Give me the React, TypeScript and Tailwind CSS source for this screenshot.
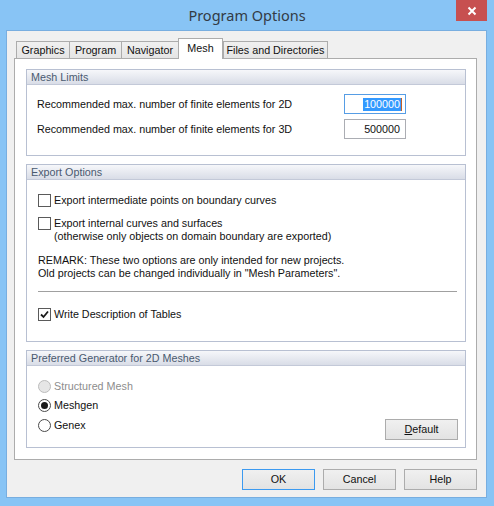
import React from "react";

const tabs = [
  { label: "Graphics", w: "w-[53px]" },
  { label: "Program", w: "w-[52px]" },
  { label: "Navigator", w: "w-[57px]" },
  { label: "Mesh", w: "w-[45px]", active: true },
  { label: "Files and Directories", w: "w-[105px]" },
];

const GroupBox = ({
  title,
  className,
  children,
}: {
  title: string;
  className: string;
  children: React.ReactNode;
}) => (
  <div className={`flex flex-col border border-[#b8c0d2] bg-white ${className}`}>
    <div className="h-[15px] flex items-center pl-[4px] border-b border-[#c3c9d8] bg-gradient-to-b from-[#f6f7fa] to-[#d9dde7] text-[#4a5a70] leading-none">
      {title}
    </div>
    {children}
  </div>
);

const CheckBox = ({ checked }: { checked?: boolean }) => (
  <div className="w-[13px] h-[13px] border border-[#5a5a5a] bg-white flex items-center justify-center shrink-0">
    {checked && (
      <svg width="9" height="9" viewBox="0 0 9 9">
        <path d="M1 4.5 L3.5 7 L8 1.5" fill="none" stroke="#1a1a1a" strokeWidth="1.8" />
      </svg>
    )}
  </div>
);

const Radio = ({ checked, disabled }: { checked?: boolean; disabled?: boolean }) => (
  <div
    className={`w-[13px] h-[13px] rounded-full border flex items-center justify-center shrink-0 ${
      disabled ? "border-[#bcbcbc] bg-[#e6e6e6]" : "border-[#4a4a4a] bg-white"
    }`}
  >
    {checked && <div className="w-[7px] h-[7px] rounded-full bg-[#1a1a1a]" />}
  </div>
);

const Button = ({
  children,
  focused,
  className = "",
}: {
  children: React.ReactNode;
  focused?: boolean;
  className?: string;
}) => (
  <div
    className={`h-[21px] w-[73px] flex items-center justify-center border bg-gradient-to-b from-[#f0f0f0] to-[#e3e3e3] text-[#111] ${
      focused ? "border-[#3c9af0]" : "border-[#acacac]"
    } ${className}`}
  >
    {children}
  </div>
);

const App = () => {
  return (
    <div className="w-[494px] h-[506px] bg-[#88c4f5] flex flex-col font-['Liberation_Sans',Arial,sans-serif] text-[10.75px] text-[#111] leading-[13px]">
      {/* title bar */}
      <div className="h-[31px] relative flex items-center justify-center shrink-0">
        <span className="text-[14.5px] leading-none text-[#333b45] font-['Noto_Sans',sans-serif] -mt-[1px]">
          Program Options
        </span>
        <div className="absolute right-[7px] top-0 w-[31px] h-[21px] bg-[#c75050] flex items-center justify-center">
          <svg width="10" height="10" viewBox="0 0 10 10">
            <path d="M1.5 1.5 L8.5 8.5 M8.5 1.5 L1.5 8.5" stroke="white" strokeWidth="2" />
          </svg>
        </div>
      </div>

      {/* client area */}
      <div className="ml-[7px] mr-[8px] h-[466px] bg-[#f0f0f0] flex flex-col pt-[7px] pl-[7px] pr-[9px] shadow-[0_0_0_1px_#78aee0]">
        {/* tab strip */}
        <div className="h-[20px] flex items-end pl-[2px] relative z-10">
          {tabs.map((t) =>
            t.active ? (
              <div
                key={t.label}
                className={`${t.w} h-[21px] -mb-px bg-white border border-b-0 border-[#acacac] flex items-center justify-center pb-[2px]`}
              >
                {t.label}
              </div>
            ) : (
              <div
                key={t.label}
                className={`${t.w} h-[17px] border-t border-l border-[#acacac] bg-gradient-to-b from-[#f0f0f0] to-[#e5e5e5] flex items-center justify-center ${
                  t.label === "Files and Directories" ? "border-r" : ""
                }`}
              >
                {t.label}
              </div>
            )
          )}
        </div>

        {/* tab page */}
        <div className="w-[463px] h-[402px] bg-white border border-[#acacac] pt-[10px] pl-[11px] flex flex-col gap-[8px]">
          <GroupBox title="Mesh Limits" className="w-[440px] h-[87px]">
            <div className="flex flex-col gap-[5px] pt-[9px] pl-[10px]">
              <div className="flex items-center h-[20px]">
                <span className="w-[307px]">Recommended max. number of finite elements for 2D</span>
                <div className="w-[62px] h-[20px] border border-[#569de5] flex items-center justify-end pr-[3px]">
                  <span className="bg-[#3399ff] text-white px-px">100000</span>
                  <span className="w-px h-[13px] bg-[#c0602a]" />
                </div>
              </div>
              <div className="flex items-center h-[20px]">
                <span className="w-[307px]">Recommended max. number of finite elements for 3D</span>
                <div className="w-[62px] h-[20px] border border-[#abadb3] flex items-center justify-end pr-[5px]">
                  500000
                </div>
              </div>
            </div>
          </GroupBox>

          <GroupBox title="Export Options" className="w-[440px] h-[178px]">
            <div className="flex flex-col pt-[14px] pl-[11px] pr-[8px]">
              <div className="flex items-start gap-[3px]">
                <CheckBox />
                <span>Export intermediate points on boundary curves</span>
              </div>
              <div className="flex items-start gap-[3px] mt-[10px]">
                <CheckBox />
                <div className="flex flex-col">
                  <span>Export internal curves and surfaces</span>
                  <span>(otherwise only objects on domain boundary are exported)</span>
                </div>
              </div>
              <div className="flex flex-col mt-[11px]">
                <span>REMARK: These two options are only intended for new projects.</span>
                <span>Old projects can be changed individually in "Mesh Parameters".</span>
              </div>
              <div className="mt-[11px] h-px bg-[#a0a0a0]" />
              <div className="flex items-start gap-[3px] mt-[16px]">
                <CheckBox checked />
                <span>Write Description of Tables</span>
              </div>
            </div>
          </GroupBox>

          <GroupBox title="Preferred Generator for 2D Meshes" className="w-[440px] h-[98px]">
            <div className="flex flex-1 justify-between pl-[11px] pr-[7px] pb-[7px]">
              <div className="flex flex-col pt-[14px] gap-[6px]">
                <div className="flex items-center gap-[3px] text-[#8d8d8d]">
                  <Radio disabled />
                  <span>Structured Mesh</span>
                </div>
                <div className="flex items-center gap-[3px]">
                  <Radio checked />
                  <span>Meshgen</span>
                </div>
                <div className="flex items-center gap-[3px] mt-px">
                  <Radio />
                  <span>Genex</span>
                </div>
              </div>
              <Button className="self-end">
                <span>
                  <span className="underline">D</span>efault
                </span>
              </Button>
            </div>
          </GroupBox>
        </div>

        {/* dialog buttons */}
        <div className="mt-[9px] flex justify-end gap-[8px]">
          <Button focused>OK</Button>
          <Button className="w-[72px]">Cancel</Button>
          <Button>Help</Button>
        </div>
      </div>
    </div>
  );
};

export default App;
